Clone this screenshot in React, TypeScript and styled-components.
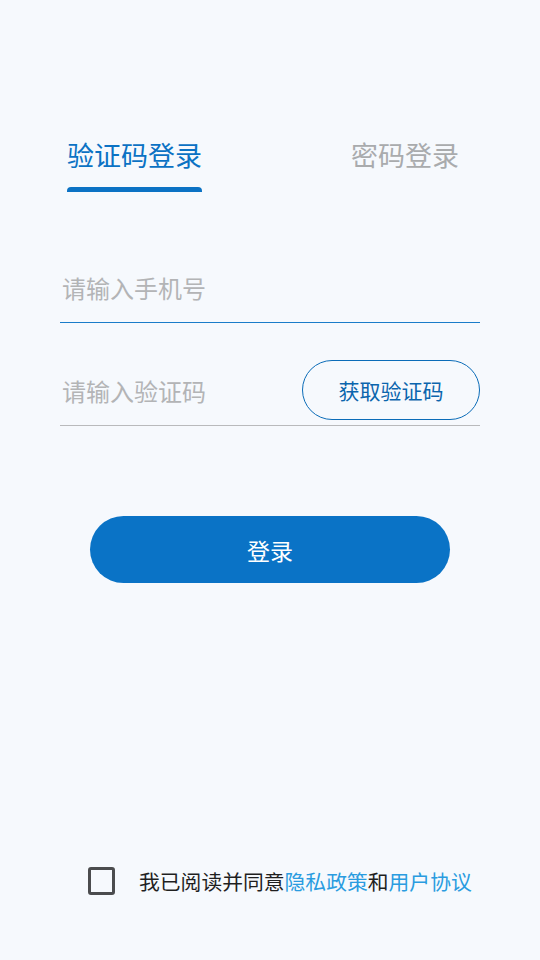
import React, { useState } from 'react';
import styled, { createGlobalStyle } from 'styled-components';

const GlobalStyle = createGlobalStyle`
  html, body {
    margin: 0;
    padding: 0;
    background: #f6f9fd;
  }
  * {
    box-sizing: border-box;
  }
  body {
    font-family: "Noto Sans CJK SC", "Noto Sans", sans-serif;
  }
`;

const Page = styled.div`
  min-height: 100vh;
  display: flex;
  flex-direction: column;
  background: #f6f9fd;
`;

const TabBar = styled.div`
  display: flex;
  justify-content: space-between;
  align-items: flex-start;
  padding: 137px 81px 0 67px;
`;

const Tab = styled.div<{ $active?: boolean }>`
  display: inline-flex;
  flex-direction: column;
  align-items: stretch;
  font-size: 27px;
  line-height: 36px;
  color: ${(p) => (p.$active ? '#0b72c4' : '#a9abad')};
  cursor: pointer;

  &::after {
    content: '';
    display: block;
    height: 5px;
    margin-top: 14px;
    border-radius: 4px 4px 0 0;
    background: ${(p) => (p.$active ? '#0b72c4' : 'transparent')};
  }
`;

const Form = styled.div`
  display: flex;
  flex-direction: column;
  padding: 65px 60px 0;
`;

const Field = styled.div<{ $focused?: boolean }>`
  display: flex;
  align-items: center;
  height: 66px;
  padding-bottom: 5px;
  margin-bottom: 37px;
  border-bottom: 1.5px solid ${(p) => (p.$focused ? '#1a7cc9' : '#b9babc')};
`;

const Input = styled.input`
  flex: 1;
  min-width: 0;
  border: none;
  outline: none;
  background: transparent;
  padding: 0 0 0 2px;
  font-family: inherit;
  font-size: 24px;
  color: #333;

  &::placeholder {
    color: #b3b4b6;
  }
`;

const CodeButton = styled.button`
  flex: none;
  width: 178px;
  height: 60px;
  border: 1.5px solid #0b6cb8;
  border-radius: 30px;
  background: transparent;
  font-family: inherit;
  font-size: 21px;
  color: #0b65ad;
  cursor: pointer;
`;

const LoginButton = styled.button`
  align-self: center;
  width: 360px;
  height: 67px;
  margin-top: 53px;
  border: none;
  border-radius: 34px;
  background: #0a73c6;
  font-family: inherit;
  font-size: 23px;
  color: #fff;
  cursor: pointer;
`;

const Agreement = styled.label`
  margin-top: auto;
  display: flex;
  align-items: center;
  gap: 24px;
  padding: 0 0 64px 88px;
  font-size: 20.8px;
  color: #1f1f1f;
  cursor: pointer;
`;

const Box = styled.span<{ $checked?: boolean }>`
  flex: none;
  width: 27px;
  height: 28px;
  border: 3px solid #4b4c4e;
  border-radius: 3px;
  background: ${(p) => (p.$checked ? '#4b4c4e' : 'transparent')};
`;

const Link = styled.span`
  color: #2a9ce0;
`;

const App = () => {
  const [tab, setTab] = useState(0);
  const [checked, setChecked] = useState(false);

  return (
    <Page>
      <GlobalStyle />
      <TabBar>
        <Tab $active={tab === 0} onClick={() => setTab(0)}>验证码登录</Tab>
        <Tab $active={tab === 1} onClick={() => setTab(1)}>密码登录</Tab>
      </TabBar>
      <Form>
        <Field $focused>
          <Input placeholder="请输入手机号" />
        </Field>
        <Field>
          <Input placeholder="请输入验证码" />
          <CodeButton>获取验证码</CodeButton>
        </Field>
        <LoginButton>登录</LoginButton>
      </Form>
      <Agreement onClick={() => setChecked(!checked)}>
        <Box $checked={checked} />
        <span>
          我已阅读并同意<Link>隐私政策</Link>和<Link>用户协议</Link>
        </span>
      </Agreement>
    </Page>
  );
};

export default App;
